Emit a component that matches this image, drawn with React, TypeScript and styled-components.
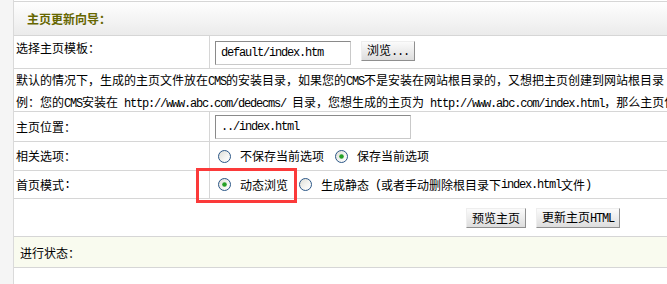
import React from 'react';
import styled, { createGlobalStyle } from 'styled-components';

const GlobalStyle = createGlobalStyle`
	html, body {
		margin: 0;
		padding: 0;
		background: #fff;
		overflow: hidden;
	}
	body {
		font-family: "Noto Sans CJK SC", "Liberation Sans", sans-serif;
		font-size: 12px;
		color: #000;
	}
`;

const LINE = '#d6d6d6';

const Page = styled.div`
	position: relative;
	display: flex;
	width: 667px;
	height: 284px;
	overflow: hidden;
`;

const SideBar = styled.div`
	flex: none;
	width: 13px;
	background: #f5f5f5;
	border-right: 1px solid #dadada;
`;

const Main = styled.div`
	flex: none;
	width: 820px;
	padding-top: 1px;
`;

const Header = styled.div`
	box-sizing: border-box;
	height: 35px;
	display: flex;
	align-items: center;
	padding-left: 13px;
	border-top: 1px solid ${LINE};
	border-bottom: 1px solid ${LINE};
	background: linear-gradient(#fefefe, #ebebeb);
	color: #666600;
	font-weight: bold;
`;

const Row = styled.div<{ $h: number }>`
	box-sizing: border-box;
	height: ${(p) => p.$h}px;
	display: grid;
	grid-template-columns: 196px 1fr;
	border-bottom: 1px solid ${LINE};
	background: #fff;
`;

const Label = styled.div<{ $pt?: number }>`
	box-sizing: border-box;
	height: 100%;
	display: flex;
	align-items: ${(p) => (p.$pt ? 'flex-start' : 'center')};
	padding: ${(p) => p.$pt || 0}px 0 0 2px;
	border-right: 1px solid ${LINE};
	line-height: 16px;
`;

const Value = styled.div<{ $pt?: number }>`
	box-sizing: border-box;
	height: 100%;
	display: flex;
	align-items: ${(p) => (p.$pt ? 'flex-start' : 'center')};
	padding: ${(p) => p.$pt || 0}px 0 0 5px;
	gap: 10px;
`;

const FullRow = styled.div<{ $h: number; $bg?: string; $pl: number }>`
	box-sizing: border-box;
	height: ${(p) => p.$h}px;
	display: flex;
	align-items: center;
	padding-left: ${(p) => p.$pl}px;
	gap: 10px;
	border-bottom: 1px solid ${LINE};
	background: ${(p) => p.$bg || '#fff'};
`;

const Notes = styled.div`
	box-sizing: border-box;
	height: 43px;
	padding: 1px 0 0 2px;
	border-bottom: 1px solid ${LINE};
	line-height: 20px;
	white-space: pre;
	overflow: hidden;
`;

const Latin = styled.span`
	font-family: "Liberation Mono", "DejaVu Sans Mono", monospace;
	font-size: 12px;
	letter-spacing: -1.2px;
	white-space: pre;
`;

const TextBox = styled.input<{ $w: number }>`
	box-sizing: border-box;
	width: ${(p) => p.$w}px;
	height: 24px;
	margin: 0;
	padding: 0 5px;
	border: 1px solid;
	border-color: #8a8a8a #c9c9c9 #c9c9c9 #8a8a8a;
	background: #fff;
	color: #000;
	font-family: "Liberation Mono", "DejaVu Sans Mono", monospace;
	font-size: 12px;
	letter-spacing: -1.2px;
	outline: none;
`;

const Button = styled.button`
	box-sizing: border-box;
	height: 20px;
	margin: 0;
	padding: 0 5px;
	border: 1px solid;
	border-color: #eeeeee #8f8f8f #8f8f8f #eeeeee;
	background: linear-gradient(#fbfbfb, #dddddd);
	color: #000;
	font-family: inherit;
	font-size: 12px;
	line-height: 16px;
	cursor: pointer;
`;

const OptionGroup = styled.div`
	display: flex;
	align-items: center;
`;

const Option = styled.label`
	display: flex;
	align-items: center;
	margin-right: 8px;
	line-height: 16px;
	white-space: pre;
`;

const RadioSvg = styled.svg`
	flex: none;
	margin: 0 9px 0 3px;
`;

const Status = styled.div`
	padding-left: 6px;
`;

const Highlight = styled.div`
	position: absolute;
	left: 196px;
	top: 168px;
	width: 101px;
	height: 35px;
	box-sizing: border-box;
	border: 3px solid #fb3a3a;
	pointer-events: none;
`;

const Radio: React.FC<{ checked?: boolean }> = ({ checked }) => (
	<RadioSvg width={13} height={13} viewBox="0 0 13 13">
		<defs>
			<linearGradient id="radioFill" x1="0" y1="0" x2="1" y2="1">
				<stop offset="0" stopColor="#dcdcd4" />
				<stop offset="0.6" stopColor="#f6f6f4" />
				<stop offset="1" stopColor="#ffffff" />
			</linearGradient>
		</defs>
		<circle cx="6.5" cy="6.5" r="6" fill="url(#radioFill)" stroke="#2c5787" strokeWidth="1" />
		{checked && <circle cx="6.5" cy="6.5" r="2.3" fill="#25a025" />}
	</RadioSvg>
);

const App: React.FC = () => {
	return (
		<>
			<GlobalStyle />
			<Page>
				<SideBar />
				<Main>
					<Header>主页更新向导：</Header>
					<Row $h={33}>
						<Label $pt={4}>选择主页模板：</Label>
						<Value $pt={5}>
							<TextBox $w={136} readOnly value="default/index.htm" />
							<Button>
								浏览<Latin>...</Latin>
							</Button>
						</Value>
					</Row>
					<Notes>
						默认的情况下，生成的主页文件放在<Latin>CMS</Latin>的安装目录，如果您的<Latin>CMS</Latin>不是安装在网站根目录的，又想把主页创建到网站根目录
						<br />
						例：您的<Latin>CMS</Latin>安装在<Latin>{' http://www.abc.com/dedecms/ '}</Latin>目录，您想生成的主页为<Latin>{' http://www.abc.com/index.html'}</Latin>，那么主页位置应该用<Latin>../index.html</Latin>
					</Notes>
					<Row $h={30}>
						<Label>主页位置：</Label>
						<Value>
							<TextBox $w={196} readOnly value="../index.html" />
						</Value>
					</Row>
					<Row $h={29}>
						<Label>相关选项：</Label>
						<Value>
							<OptionGroup>
								<Option>
									<Radio />
									不保存当前选项
								</Option>
								<Option>
									<Radio checked />
									保存当前选项
								</Option>
							</OptionGroup>
						</Value>
					</Row>
					<Row $h={28}>
						<Label>
							首页模式<Latin>:</Latin>
						</Label>
						<Value>
							<OptionGroup>
								<Option>
									<Radio checked />
									动态浏览
								</Option>
								<Option>
									<Radio />
									生成静态<Latin>{' ('}</Latin>或者手动删除根目录下<Latin>index.html</Latin>文件<Latin>)</Latin>
								</Option>
							</OptionGroup>
						</Value>
					</Row>
					<FullRow $h={38} $pl={452}>
						<Button>预览主页</Button>
						<Button>
							更新主页<Latin>HTML</Latin>
						</Button>
					</FullRow>
					<FullRow $h={31} $pl={0} $bg="#f9fbef">
						<Status>进行状态：</Status>
					</FullRow>
				</Main>
				<Highlight />
			</Page>
		</>
	);
};

export default App;
